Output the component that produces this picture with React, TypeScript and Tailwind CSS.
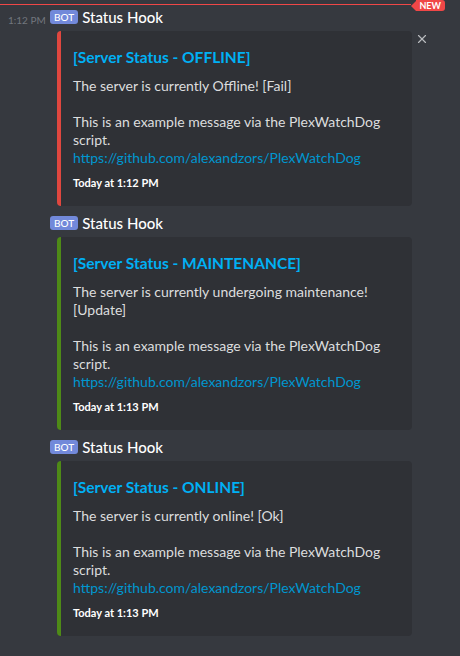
import { X } from 'lucide-react';

type Embed = {
  time: string;
  showTime: boolean;
  color: string;
  title: string;
  lines: string[];
  footer: string;
};

const embeds: Embed[] = [
  {
    time: '1:12 PM',
    showTime: true,
    color: 'border-l-[#e0473f]',
    title: '[Server Status - OFFLINE]',
    lines: ['The server is currently Offline! [Fail]'],
    footer: 'Today at 1:12 PM',
  },
  {
    time: '1:13 PM',
    showTime: false,
    color: 'border-l-[#4e8a17]',
    title: '[Server Status - MAINTENANCE]',
    lines: ['The server is currently undergoing maintenance! [Update]'],
    footer: 'Today at 1:13 PM',
  },
  {
    time: '1:13 PM',
    showTime: false,
    color: 'border-l-[#4e8a17]',
    title: '[Server Status - ONLINE]',
    lines: ['The server is currently online! [Ok]'],
    footer: 'Today at 1:13 PM',
  },
];

function Message({ embed, first }: { embed: Embed; first: boolean }) {
  return (
    <div className="flex">
      <div className="w-[50px] shrink-0 pl-[8px] pt-[6px]">
        {embed.showTime && (
          <span className="text-[10px] leading-[22px] text-[#72767d]">{embed.time}</span>
        )}
      </div>
      <div className="flex-1 pt-[6px]">
        <div className="flex items-center h-[22px]">
          <span className="bg-[#7289da] text-white text-[10px] leading-[14px] px-[4px] rounded-[3px] mr-[4px] font-medium">
            BOT
          </span>
          <span className="text-white text-[15px] leading-[22px] font-medium">Status Hook</span>
        </div>
        <div className="flex items-start">
          <div
            className={`ml-[7px] mt-[3px] w-[355px] bg-[#2f3136] border-l-4 ${embed.color} rounded-[4px] pl-[12px] pr-[16px] pt-[16px] pb-[15px]`}
          >
            <div className="text-[#00b0f4] font-bold text-[15.5px] leading-[20px]">{embed.title}</div>
            <div className="mt-[10px] text-[14px] leading-[18px] text-[#dcddde]">
              {embed.lines.map((l) => (
                <div key={l}>{l}</div>
              ))}
              <div>&nbsp;</div>
              <div>This is an example message via the PlexWatchDog script.</div>
              <div className="text-[#0096cf]">https://github.com/alexandzors/PlexWatchDog</div>
            </div>
            <div className="mt-[8px] text-[11px] leading-[16px] font-bold text-white">
              {embed.footer}
            </div>
          </div>
          {first && (
            <X size={14} strokeWidth={2} className="text-[#b9bbbe] ml-[3px] mt-[4px]" />
          )}
        </div>
      </div>
    </div>
  );
}

export default function App() {
  return (
    <div className="w-[460px] h-[656px] bg-[#36393f] overflow-hidden font-['Lato',sans-serif]">
      <div className="relative h-[11px] flex items-start pr-[15px]">
        <div className="flex-1 h-px bg-[#f04747] mt-[4px]" />
        <div className="h-[11px] flex items-center">
          <div className="w-0 h-0 border-y-[5.5px] border-y-transparent border-r-[5px] border-r-[#f04747]" />
          <span className="bg-[#f04747] text-white text-[9px] leading-[11px] font-bold pl-[3px] pr-[4px] rounded-r-[3px]">
            NEW
          </span>
        </div>
      </div>
      <div className="-mt-[11px]">
        {embeds.map((e, i) => (
          <Message key={i} embed={e} first={i === 0} />
        ))}
      </div>
    </div>
  );
}
